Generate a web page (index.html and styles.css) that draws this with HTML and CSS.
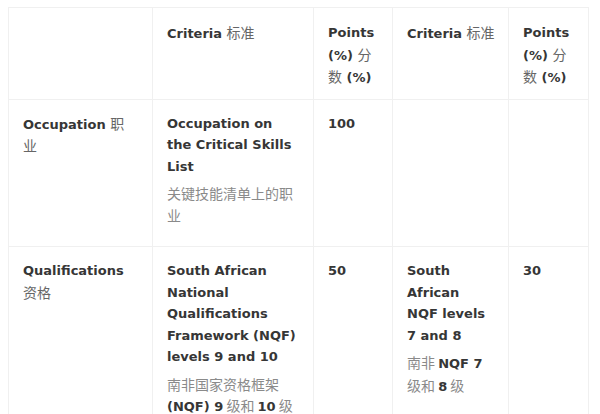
FILE: index.html
```html
<!DOCTYPE html>
<html lang="en">
<head>
<meta charset="utf-8">
<link rel="stylesheet" href="styles.css">
</head>
<body>
<table class="pts">
  <colgroup>
    <col class="c1"><col class="c2"><col class="c3"><col class="c4"><col class="c5">
  </colgroup>
  <thead>
    <tr>
      <th class="k1"></th>
      <th>Criteria <span class="zh">标准</span></th>
      <th>Points (%) <span class="zh">分数</span> (%)</th>
      <th class="k4">Criteria <span class="zh">标准</span></th>
      <th>Points (%) <span class="zh">分数</span> (%)</th>
    </tr>
  </thead>
  <tbody>
    <tr>
      <td class="k1">Occupation <span class="zh">职业</span></td>
      <td>
        <p>Occupation on the Critical Skills List</p>
        <p class="sub">关键技能清单上的职业</p>
      </td>
      <td><p>100</p></td>
      <td></td>
      <td></td>
    </tr>
    <tr>
      <td class="k1">Qualifications <span class="zh">资格</span></td>
      <td>
        <p>South African National Qualifications Framework (NQF) levels 9 and 10</p>
        <p class="sub">南非国家资格框架 <b>(NQF) 9</b> 级和 <b>10</b> 级</p>
      </td>
      <td><p>50</p></td>
      <td>
        <p>South African NQF levels 7 and 8</p>
        <p class="sub">南非 <b>NQF 7</b> 级和 <b>8</b> 级</p>
      </td>
      <td><p>30</p></td>
    </tr>
  </tbody>
</table>
</body>
</html>
```
FILE: styles.css
```css
html, body {
  margin: 0;
  padding: 0;
  background: #ffffff;
}
body {
  padding: 7px 8px;
  font-family: "DejaVu Sans", "Noto Sans CJK SC", sans-serif;
  font-size: 13px;
  line-height: 21.5px;
  color: #363636;
}
.pts {
  border-collapse: collapse;
  table-layout: fixed;
  width: 580px;
}
.c1 { width: 144px; }
.c2 { width: 161px; }
.c3 { width: 79px; }
.c4 { width: 116px; }
.c5 { width: 80px; }
.pts th, .pts td {
  border: 1px solid #f0f0f0;
  text-align: left;
  vertical-align: top;
  padding: 13px 14px 20px 14px;
  font-weight: bold;
}
.pts thead th {
  padding-top: 14px;
  padding-bottom: 10px;
}
.pts .k1 {
  padding-right: 20px;
}
.pts .k4 {
  padding-right: 10px;
}
.pts p {
  margin: 0;
}
.pts p + p {
  margin-top: 6px;
}
.zh {
  font-family: "Noto Sans CJK SC", sans-serif;
  font-size: 14px;
  line-height: 20px;
  font-weight: 400;
  color: #666666;
}
.sub {
  font-family: "Noto Sans CJK SC", sans-serif;
  font-size: 14px;
  font-weight: 400;
  color: #8a8a8a;
}
.sub b {
  font-family: "DejaVu Sans", sans-serif;
  font-size: 13px;
  font-weight: bold;
  color: #363636;
}
```
